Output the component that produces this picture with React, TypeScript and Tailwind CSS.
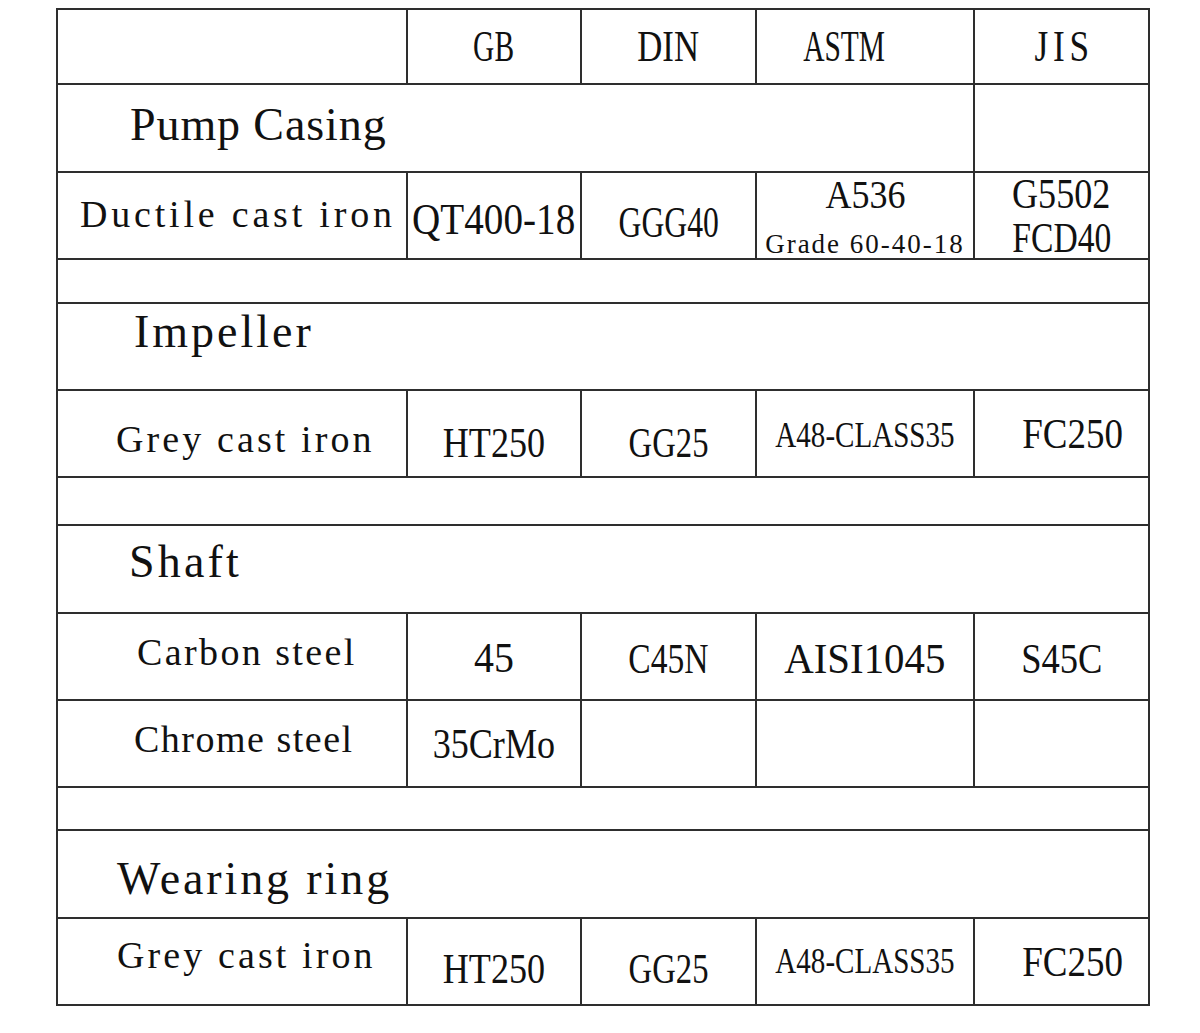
import type { ReactNode } from "react";

// material comparison table: GB / DIN / ASTM / JIS

function T({ children, className }: { children: ReactNode; className: string }) {
  return <span className={`inline-block leading-none whitespace-nowrap ${className}`}>{children}</span>;
}

const cell = "border-r-2 border-b-2 border-[#2e2e2e] flex items-center";

export default function App() {
  return (
    <div className="min-h-[1033px] w-[1200px] bg-white pl-[56px] pt-[8px] font-['Liberation_Serif',serif] text-[#111]">
      <div className="grid w-[1094px] grid-cols-[350px_174px_175px_218px_175px] grid-rows-[75px_88px_87px_44px_87px_87px_48px_88px_87px_87px_43px_88px_87px] border-l-2 border-t-2 border-[#2e2e2e]">
        {/* header */}
        <div className={cell}></div>
        <div className={`${cell} justify-center`}><T className="text-[44px] scale-x-[0.67]">GB</T></div>
        <div className={`${cell} justify-center`}><T className="text-[44px] scale-x-[0.79]">DIN</T></div>
        <div className={`${cell} justify-center pr-[42px]`}><T className="text-[44px] scale-x-[0.67]">ASTM</T></div>
        <div className={`${cell} justify-center pl-[5px]`}><T className="text-[44px] scale-x-[0.8] tracking-[6px]">JIS</T></div>

        {/* pump casing */}
        <div className={`${cell} col-span-4 pl-[72px] pb-[6px]`}><T className="text-[46px] tracking-[0.9px]">Pump Casing</T></div>
        <div className={cell}></div>

        <div className={`${cell} pl-[22px] pb-[3px]`}><T className="text-[38px] tracking-[3.8px]">Ductile cast iron</T></div>
        <div className={`${cell} justify-center pt-[9px]`}><T className="text-[44px] scale-x-[0.89]">QT400-18</T></div>
        <div className={`${cell} justify-center pt-[14px]`}><T className="text-[44px] scale-x-[0.72]">GGG40</T></div>
        <div className={`${cell} flex-col justify-center gap-[16px] pt-[2px]`}>
          <T className="text-[40px] scale-x-[0.9]">A536</T>
          <T className="text-[27px] tracking-[2px]">Grade 60-40-18</T>
        </div>
        <div className={`${cell} flex-col justify-center gap-[2px]`}>
          <T className="text-[42px] scale-x-[0.86]">G5502</T>
          <T className="text-[42px] scale-x-[0.8]">FCD40</T>
        </div>

        <div className={`${cell} col-span-5`}></div>

        {/* impeller */}
        <div className={`${cell} col-span-5 pl-[76px] pb-[30px]`}><T className="text-[46px] tracking-[3px]">Impeller</T></div>

        <div className={`${cell} pl-[58px] pt-[11px]`}><T className="text-[38px] tracking-[3.1px]">Grey cast iron</T></div>
        <div className={`${cell} justify-center pt-[17px]`}><T className="text-[43px] scale-x-[0.84]">HT250</T></div>
        <div className={`${cell} justify-center pt-[17px]`}><T className="text-[43px] scale-x-[0.76]">GG25</T></div>
        <div className={`${cell} justify-center pt-[3px]`}><T className="text-[35px] scale-x-[0.83]">A48-CLASS35</T></div>
        <div className={`${cell} justify-center pl-[22px]`}><T className="text-[43px] scale-x-[0.86]">FC250</T></div>

        <div className={`${cell} col-span-5`}></div>

        {/* shaft */}
        <div className={`${cell} col-span-5 pl-[71px] pb-[14px]`}><T className="text-[46px] tracking-[3.2px]">Shaft</T></div>

        <div className={`${cell} pl-[79px] pb-[10px]`}><T className="text-[38px] tracking-[2.4px]">Carbon steel</T></div>
        <div className={`${cell} justify-center pt-[3px]`}><T className="text-[42px] scale-x-[0.95]">45</T></div>
        <div className={`${cell} justify-center pt-[3px]`}><T className="text-[43px] scale-x-[0.78]">C45N</T></div>
        <div className={`${cell} justify-center pt-[3px]`}><T className="text-[43px] scale-x-[0.95]">AISI1045</T></div>
        <div className={`${cell} justify-center pt-[3px]`}><T className="text-[43px] scale-x-[0.85]">S45C</T></div>

        <div className={`${cell} pl-[76px] pb-[10px]`}><T className="text-[38px] tracking-[1.5px]">Chrome steel</T></div>
        <div className={`${cell} justify-center`}><T className="text-[43px] scale-x-[0.84]">35CrMo</T></div>
        <div className={cell}></div>
        <div className={cell}></div>
        <div className={cell}></div>

        <div className={`${cell} col-span-5`}></div>

        {/* wearing ring */}
        <div className={`${cell} col-span-5 pl-[59px] pt-[10px]`}><T className="text-[46px] tracking-[2.9px]">Wearing ring</T></div>

        <div className={`${cell} pl-[59px] pb-[14px]`}><T className="text-[38px] tracking-[3.1px]">Grey cast iron</T></div>
        <div className={`${cell} justify-center pt-[13px]`}><T className="text-[43px] scale-x-[0.84]">HT250</T></div>
        <div className={`${cell} justify-center pt-[13px]`}><T className="text-[43px] scale-x-[0.76]">GG25</T></div>
        <div className={`${cell} justify-center`}><T className="text-[35px] scale-x-[0.83]">A48-CLASS35</T></div>
        <div className={`${cell} justify-center pl-[22px]`}><T className="text-[43px] scale-x-[0.86]">FC250</T></div>
      </div>
    </div>
  );
}
